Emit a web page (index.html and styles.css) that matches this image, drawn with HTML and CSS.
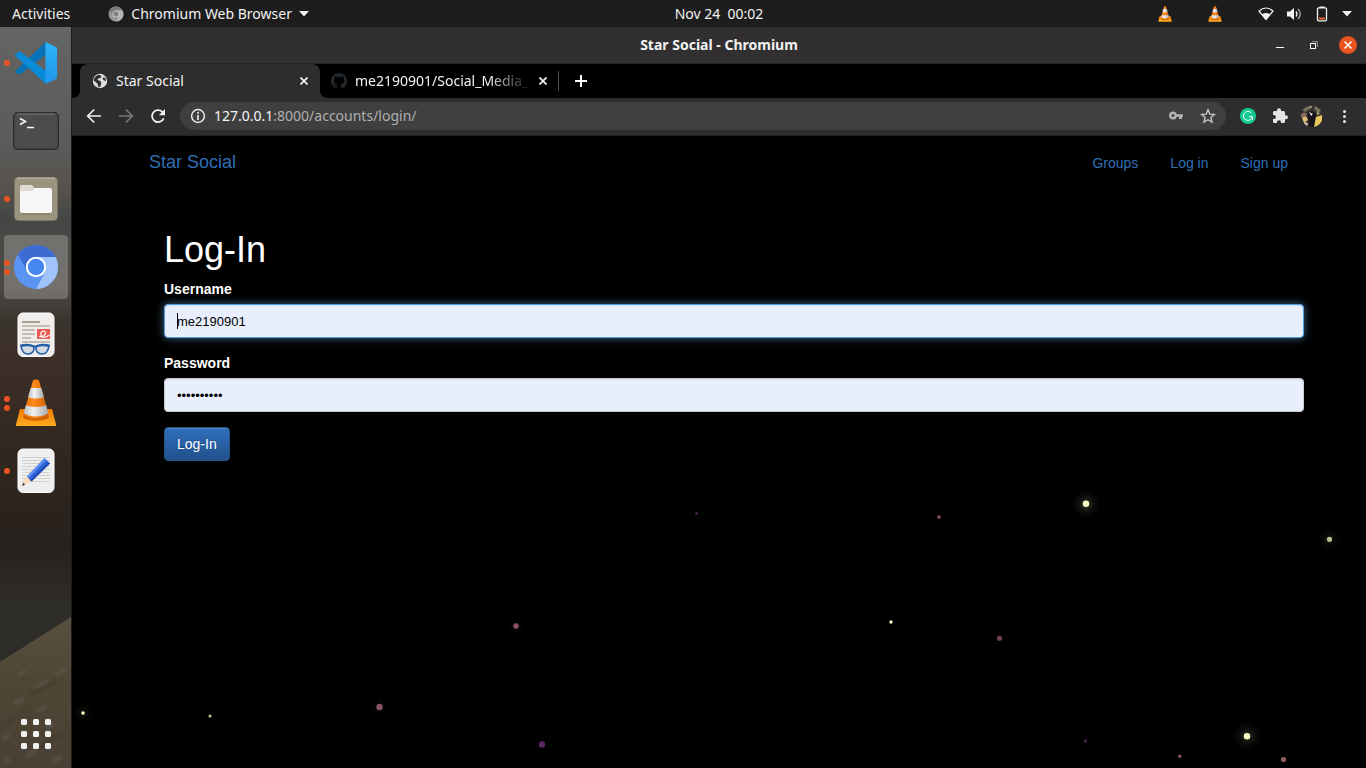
FILE: index.html
```html
<!DOCTYPE html>
<html lang="en">
<head>
<meta charset="utf-8">
<title>Star Social</title>
<link rel="stylesheet" href="styles.css">
</head>
<body>
<svg class="defs" width="0" height="0" aria-hidden="true">
  <defs>
    <linearGradient id="coneBase" x1="0" y1="0" x2="0" y2="1"><stop offset="0" stop-color="#f27a00"/><stop offset="1" stop-color="#ffad1f"/></linearGradient>
    <linearGradient id="coneOrange" x1="0" x2="1"><stop offset="0" stop-color="#e86a00"/><stop offset=".4" stop-color="#ff8c1a"/><stop offset="1" stop-color="#cf5a00"/></linearGradient>
    <linearGradient id="coneWhite" x1="0" x2="1"><stop offset="0" stop-color="#b9bcc0"/><stop offset=".4" stop-color="#f1f2f3"/><stop offset="1" stop-color="#a5a9ad"/></linearGradient>
    <linearGradient id="blade" x1="0" y1="0" x2="0" y2="1"><stop offset="0" stop-color="#2bb4f8"/><stop offset="1" stop-color="#1f96ea"/></linearGradient>
    <linearGradient id="wall" x1="0" y1="0" x2="0" y2="1">
      <stop offset="0" stop-color="#636563"/><stop offset=".16" stop-color="#5c5b5a"/><stop offset=".22" stop-color="#56524c"/><stop offset=".26" stop-color="#434644"/><stop offset=".3" stop-color="#4c4a47"/><stop offset=".35" stop-color="#4c4844"/><stop offset=".4" stop-color="#39332d"/><stop offset=".44" stop-color="#3d3028"/><stop offset=".56" stop-color="#33281f"/><stop offset=".7" stop-color="#27211d"/><stop offset=".78" stop-color="#2f2d28"/><stop offset="1" stop-color="#2c2b29"/>
    </linearGradient>
    <linearGradient id="wood" x1="0" y1="0" x2="0" y2="1"><stop offset="0" stop-color="#58503f"/><stop offset=".45" stop-color="#4f4534"/><stop offset="1" stop-color="#4a4136"/></linearGradient>
    <filter id="soften"><feGaussianBlur stdDeviation="1.500"/></filter>
    <symbol id="cone" viewBox="0 0 42 48">
      <path d="M5 30h32l4 15.500q.4 1.500-1 1.500H2q-1.400 0-1-1.500z" fill="url(#coneBase)"/>
      <path d="M10 32 8 38c2 5 24 5 26 0l-2-6z" fill="#c65500" opacity=".75"/>
      <path d="M18 1.500Q21 -.5 24 1.500L33.500 35c-2 5.500-23 5.500-25 0z" fill="url(#coneOrange)"/>
      <path d="M15.800 9h10.400L29 18c-3 2-13 2-16 0z" fill="url(#coneWhite)"/>
      <path d="M11 26c4 2.500 16 2.500 20 0l2.300 8c-5 4.500-19.500 4.500-24.600 0z" fill="url(#coneWhite)"/>
    </symbol>
  </defs>
</svg>

<header class="topbar">
  <div class="topbar-left">
    <button class="bar-btn">Activities</button>
    <button class="bar-btn app-menu">
      <svg width="16" height="16" viewBox="0 0 16 16"><circle cx="8" cy="8" r="7.500" fill="#969696"/><path d="M8 4.200h6.400A7.500 7.500 0 0 1 8 15.500L11.300 10z" fill="#b4b4b4"/><path d="M1.600 4A7.500 7.500 0 0 1 14.400 4.200H8L4.700 9.500z" fill="#7b7b7b"/><circle cx="8" cy="8" r="3.600" fill="#d5d5d5"/><circle cx="8" cy="8" r="2.700" fill="#828282"/></svg>
      <span>Chromium Web Browser</span>
      <svg width="10" height="6" viewBox="0 0 10 6"><path d="M0 0h10L5 5.500z" fill="#f2f2f2"/></svg>
    </button>
  </div>
  <button class="bar-btn clock">Nov 24&nbsp; 00:02</button>
  <div class="tray">
    <svg class="tray-cone" width="14" height="16"><use href="#cone"/></svg>
    <svg class="tray-cone" width="14" height="16"><use href="#cone"/></svg>
    <svg width="16" height="14" viewBox="0 0 16 14"><path d="M1 4Q8-2 15 4L8 12.500z" fill="none" stroke="#f2f2f2" stroke-width="1.200" stroke-linejoin="round"/><path d="M4 7.300Q8 4.500 12 7.300L8 12.500z" fill="#f2f2f2"/></svg>
    <svg width="16" height="14" viewBox="0 0 16 14"><path d="M1 4.500h3L8 1v12L4 9.500H1z" fill="#f2f2f2"/><path d="M10 4.500q2 2.500 0 5" fill="none" stroke="#f2f2f2" stroke-width="1.300"/><path d="M12 2q4.500 5 0 10" fill="none" stroke="#a8a8a8" stroke-width="1.300"/></svg>
    <svg width="16" height="16" viewBox="0 0 16 16"><path d="M5.500 2V.5h5V2" fill="#f2f2f2"/><rect x="3.500" y="1.800" width="9" height="13" rx="1.200" fill="none" stroke="#f2f2f2" stroke-width="1.300"/><path d="M5 11.500h6v2H5z" fill="#f0652f"/></svg>
    <svg width="10" height="6" viewBox="0 0 10 6"><path d="M0 0h10L5 5.500z" fill="#f2f2f2"/></svg>
  </div>
</header>

<div class="desktop">
  <nav class="dock" aria-label="Dock">
    <svg class="wallpaper" viewBox="0 0 71 741" preserveAspectRatio="none">
      <path d="M0 0h71v741H0z" fill="url(#wall)"/>
      <path d="M0 635 71 590V741H0z" fill="url(#wood)"/>
      <g stroke="#6a665e" stroke-width="3" opacity=".5" filter="url(#soften)"><path d="M18 648 26 644M36 660 48 654M55 648 66 642M14 676 24 672M38 684 46 680M2 712 10 708M46 702 54 697M26 730 36 724M52 735 62 730M4 735 10 732"/></g>
      <g stroke="#3a3228" stroke-width="2" opacity=".6" filter="url(#soften)"><path d="M0 700 30 680M30 668 56 654M40 720 70 702"/></g>
    </svg>
    <button class="dock-item" aria-label="Visual Studio Code">
      <span class="dots"><i></i></span>
      <svg width="42" height="42" viewBox="0 0 42 42"><path d="M0 29.500 30.500 0v13L5.500 32q-1 .8-2 0L.5 30.800q-.8-.6-.5-1.300z" fill="#0872b9"/><path d="M.3 12.500 3.500 9.800q1-.6 2 0L31 29v13L.5 14q-.6-.8-.2-1.500z" fill="#0a8bd8"/><path d="M30.500 0 42 5.500v31L30.500 42z" fill="url(#blade)"/></svg>
    </button>
    <button class="dock-item" aria-label="Terminal">
      <svg width="46" height="38" viewBox="0 0 46 38"><rect x=".7" y=".7" width="44.600" height="36.600" rx="4" fill="#4c4c4c" stroke="#2c2c2c" stroke-width="1.400"/><path d="M4 2h38" stroke="#7d7d7d"/><path d="m7 6.500 5.500 3-5.500 3" fill="none" stroke="#fff" stroke-width="1.500"/><path d="M14 15.500h7" stroke="#fff" stroke-width="1.500"/></svg>
    </button>
    <button class="dock-item" aria-label="Files">
      <span class="dots"><i></i></span>
      <svg width="46" height="46" viewBox="0 0 46 46"><rect x="1" y="1" width="44" height="44" rx="4.500" fill="#9b9480" stroke="#57534a"/><path d="M4 2h38" stroke="#c5bfae"/><path d="M7 19v-8q0-2 2-2h9q1.500 0 2.200 1.500L22 13H38v6z" fill="#dfdbd0"/><rect x="7" y="12" width="32" height="25" rx="2.500" fill="#f8f7f5"/><path d="M7 15h12l3-3H8z" fill="#dfdbd0"/><path d="M9 38h28" stroke="#7b7463"/></svg>
    </button>
    <button class="dock-item active" aria-label="Chromium">
      <span class="dots"><i></i><i></i></span>
      <svg width="44" height="44" viewBox="0 0 44 44"><circle cx="22" cy="22" r="22" fill="#5b95f4"/><path d="M22 12H41.600A22 22 0 0 1 22 44L31.500 26.500z" fill="#a1c3fb"/><path d="M4 9.500A22 22 0 0 1 41.600 12H22L12.800 26z" fill="#3c6bd2"/><circle cx="22" cy="22" r="10.200" fill="#fff"/><circle cx="22" cy="22" r="8.200" fill="#4688f1"/></svg>
    </button>
    <button class="dock-item" aria-label="Document Viewer">
      <svg width="38" height="46" viewBox="0 0 38 46"><rect x="1" y="1" width="36" height="43.500" rx="5" fill="#efeeed" stroke="#fff"/><g stroke="#c3bdb4" stroke-width="2"><path d="M5 10h18" stroke="#a89f92"/><path d="M5 14h28M5 18h13M5 22h13M5 26h9M5 30h28"/></g><path d="M20 17h13v10H20z" fill="#ec5b51"/><path d="M22 24.500c7 1 8-5.500 4.500-5.500s-3.500 6 0 6.300 4-1.800 6-2.300" fill="none" stroke="#fff" stroke-width="1.200"/><path d="M4 34.200q7-2 13 .5.500 7-6 7.300C6.500 42 5 39.500 4 34.200zM32 34.200q-7-2-13 .5-.5 7 6 7.300c4.500 0 6-2.500 7-7.800z" fill="#d4dae0" stroke="#265ea8" stroke-width="1.700"/><path d="M3 33.500q8-2 15 1 7-3 15-1" fill="none" stroke="#265ea8" stroke-width="1.800"/></svg>
    </button>
    <button class="dock-item" aria-label="VLC media player">
      <span class="dots"><i></i><i></i></span>
      <svg width="42" height="48"><use href="#cone"/></svg>
    </button>
    <button class="dock-item" aria-label="Text Editor">
      <span class="dots"><i></i></span>
      <svg width="38" height="46" viewBox="0 0 38 46"><rect x="1" y="1" width="36" height="43.500" rx="5" fill="#efefef" stroke="#fff"/><path d="M5 9.500h28M5 12.500h28M5 15.500h28M5 18.500h28M5 21.500h28M5 24.500h28M5 27.500h28M5 30.500h28M5 33.500h28" stroke="#d0d0d0"/><path d="m5 38 4-9.500 6 5z" fill="#fcd9b8"/><path d="m5 38 1.200-3.300 2 1.800z" fill="#333"/><path d="M10 28.500 27.500 10l5.500 5.500-18.500 18z" fill="#2f66dc"/><path d="m10 28.500 17.500-18.500 1.800 1.800-17.800 18.200z" fill="#5f8ff2"/><path d="m13 32 18-18 2 1.500-18.500 18z" fill="#1f4db4"/></svg>
    </button>
    <button class="dock-item show-apps" aria-label="Show Applications">
      <svg width="30" height="30" viewBox="0 0 30 30" fill="#f2f2f2"><rect width="6" height="6" rx="1.500"/><rect x="12" width="6" height="6" rx="1.500"/><rect x="24" width="6" height="6" rx="1.500"/><rect y="12" width="6" height="6" rx="1.500"/><rect x="12" y="12" width="6" height="6" rx="1.500"/><rect x="24" y="12" width="6" height="6" rx="1.500"/><rect y="24" width="6" height="6" rx="1.500"/><rect x="12" y="24" width="6" height="6" rx="1.500"/><rect x="24" y="24" width="6" height="6" rx="1.500"/></svg>
    </button>
  </nav>

  <div class="window">
    <div class="titlebar">
      <span class="title">Star Social - Chromium</span>
      <div class="win-controls">
        <button aria-label="Minimize"><svg width="18" height="18" viewBox="0 0 18 18"><path d="M5 11.500h8" stroke="#fff"/></svg></button>
        <button aria-label="Restore"><svg width="18" height="18" viewBox="0 0 18 18"><path d="M7 5.500h5.500V11" fill="none" stroke="#929292"/><rect x="5.500" y="7.500" width="5" height="5" fill="none" stroke="#fff"/></svg></button>
        <button aria-label="Close"><svg width="18" height="18" viewBox="0 0 18 18"><circle cx="9" cy="9" r="9" fill="#e95420"/><path d="m5.500 5.500 7 7m0-7-7 7" stroke="#fff" stroke-width="1.500"/></svg></button>
      </div>
    </div>

    <div class="tabs">
      <div class="tab current">
        <svg width="16" height="16" viewBox="0 0 16 16"><circle cx="8" cy="8" r="7.200" fill="#dedede"/><path d="M7.200 1.800 9.500 3l-1 2.200H6.300L5.500 7l3 1 .8 2.300L8 14.200l-2-.8-.2-2.300L3 8.500l-1.300-.7C1.800 5 4 2.300 7.200 1.800zM11 4.500l2.200.3 1 3.200-2-.5-1.500-1.300z" fill="#2d2d2d"/></svg>
        <span class="tab-title">Star Social</span>
        <button class="tab-close" aria-label="Close tab"><svg width="8" height="8" viewBox="0 0 8 8"><path d="m.5.5 7 7m0-7-7 7" stroke="#f4f4f4" stroke-width="1.700"/></svg></button>
      </div>
      <div class="tab">
        <svg width="16" height="16" viewBox="0 0 16 16"><path fill="#24292e" d="M8 0C3.580 0 0 3.580 0 8c0 3.540 2.290 6.530 5.470 7.590.4.070.55-.17.55-.38v-1.490c-2.010.37-2.530-.49-2.690-.94-.09-.23-.48-.94-.82-1.130-.28-.15-.68-.52-.01-.53.63-.01 1.080.58 1.230.82.72 1.210 1.870.87 2.330.66.07-.52.28-.87.51-1.070-1.780-.2-3.640-.89-3.640-3.950 0-.87.31-1.590.82-2.150-.08-.2-.36-1.020.08-2.120 0 0 .67-.21 2.200.82a7.500 7.500 0 0 1 4 0c1.530-1.040 2.200-.82 2.200-.82.44 1.100.16 1.920.08 2.120.51.56.82 1.270.82 2.150 0 3.070-1.870 3.750-3.650 3.950.29.25.54.73.54 1.480v2.200c0 .21.15.46.55.38A8 8 0 0 0 16 8c0-4.420-3.580-8-8-8z"/></svg>
        <span class="tab-title faded">me2190901/Social_Media_</span>
        <button class="tab-close" aria-label="Close tab"><svg width="8" height="8" viewBox="0 0 8 8"><path d="m.5.5 7 7m0-7-7 7" stroke="#f4f4f4" stroke-width="1.700"/></svg></button>
      </div>
      <button class="new-tab" aria-label="New tab"><svg width="12" height="12" viewBox="0 0 12 12"><path d="M6 0v12M0 6h12" stroke="#fff" stroke-width="2"/></svg></button>
    </div>

    <div class="toolbar">
      <button aria-label="Back"><svg width="16" height="16" viewBox="0 0 16 16"><path d="M15 8H2M8.200 1.500 1.700 8l6.500 6.500" fill="none" stroke="#f0f0f0" stroke-width="1.700"/></svg></button>
      <button aria-label="Forward"><svg width="16" height="16" viewBox="0 0 16 16"><path d="M1 8h13M7.800 1.500 14.300 8l-6.500 6.500" fill="none" stroke="#787878" stroke-width="1.700"/></svg></button>
      <button aria-label="Reload"><svg width="16" height="16" viewBox="0 0 16 16"><path d="M13.700 10.200A6 6 0 1 1 12.300 3.800L14 5.500" fill="none" stroke="#f0f0f0" stroke-width="1.800"/><path d="M15 1v6.200H8.800z" fill="#f0f0f0"/></svg></button>
      <div class="omnibox">
        <svg width="16" height="16" viewBox="0 0 16 16"><circle cx="8" cy="8" r="6.400" fill="none" stroke="#e8e8e8" stroke-width="1.500"/><path d="M8 7v5M8 4v1.700" stroke="#e8e8e8" stroke-width="1.700"/></svg>
        <div class="url"><b>127.0.0.1</b>:8000/accounts/login/</div>
        <button aria-label="Saved password"><svg width="16" height="16" viewBox="0 0 16 16"><path fill="#b5b5b5" fill-rule="evenodd" d="M5 3.500a4 4 0 1 0 3.800 5.200H11V11h3V8.700h1V6.300H8.800A4 4 0 0 0 5 3.500zm0 2.500a1.500 1.500 0 1 1 0 3 1.500 1.500 0 0 1 0-3z"/></svg></button>
        <button aria-label="Bookmark this page"><svg width="16" height="16" viewBox="0 0 16 16"><path d="m8 1.800 1.800 4.300 4.700.4-3.600 3 1.100 4.600L8 11.700l-4 2.400 1.100-4.600-3.600-3 4.700-.4z" fill="none" stroke="#c9c9c9" stroke-width="1.300"/></svg></button>
      </div>
      <button class="ext" aria-label="Grammarly"><svg width="16" height="16" viewBox="0 0 16 16"><circle cx="8" cy="8" r="8" fill="#12cb93"/><path d="M11.200 4.800A4.500 4.500 0 1 0 12.300 9M9 8.700h3.500V12" fill="none" stroke="#fff" stroke-width="1"/></svg></button>
      <button aria-label="Extensions"><svg width="16" height="16" viewBox="0 0 16 16"><path fill="#e3e3e3" d="M14 7.300h-1V4.500Q13 3 11.500 3H9V2.200a2 2 0 0 0-4 0V3H2.300Q1 3 1 4.500V7h.9a2 2 0 0 1 0 4H1v2.700Q1 15 2.300 15H5v-.8a2 2 0 0 1 4 0V15h2.500q1.500 0 1.500-1.300v-2.500h1a1.950 1.950 0 0 0 0-3.900z"/></svg></button>
      <button class="profile" aria-label="Profile"><svg width="22" height="22" viewBox="0 0 22 22"><clipPath id="round"><circle cx="11" cy="11" r="11"/></clipPath><g clip-path="url(#round)"><path d="M0 0h22v22H0z" fill="#34302d"/><path d="M1 5 7 1l3 2-6 4zM14 1l6 4-2 3-5-4z" fill="#74735c"/><path d="M8 1h3l-1 3zM16 6l3 3-3 1z" fill="#a6a489"/><path d="M0 9q4-3 6 0l-3 4-3-1z" fill="#8c6d62"/><path d="M1 13 5 11l2 4-4 3z" fill="#e0bc78"/><path d="m7 8 4-2 4 3-1 5 0 8H8z" fill="#15131b"/><path d="m8 7 4 2-2 2z" fill="#e8e1d8"/><path d="m15 12 6-2v8l-5 4h-3z" fill="#e8c75c"/><path d="m3 17 4 1-1 4H3z" fill="#c9b5a8"/></g></svg></button>
      <button aria-label="Menu"><svg width="16" height="16" viewBox="0 0 16 16" fill="#e8e8e8"><circle cx="8.500" cy="3.500" r="1.500"/><circle cx="8.500" cy="8.500" r="1.500"/><circle cx="8.500" cy="13.500" r="1.500"/></svg></button>
    </div>

    <div class="page">
      <svg class="sky" viewBox="0 0 1294 632" preserveAspectRatio="xMinYMin slice" aria-hidden="true">
        <defs><radialGradient id="halo"><stop offset="0" stop-color="#ffffc8" stop-opacity=".25"/><stop offset=".5" stop-color="#ffffc8" stop-opacity=".06"/><stop offset="1" stop-color="#ffffc8" stop-opacity="0"/></radialGradient></defs>
        <g fill="url(#halo)"><circle cx="1014" cy="368" r="14"/><circle cx="1257" cy="403" r="12" opacity=".4"/><circle cx="1175" cy="600" r="15" opacity=".8"/><circle cx="11" cy="577" r="10" opacity=".4"/><circle cx="444" cy="490" r="9" opacity=".25"/><circle cx="307" cy="571" r="9" opacity=".25"/></g>
        <g fill="#ffffc8"><circle cx="1014" cy="367.700" r="3.200"/><circle cx="1257.500" cy="403.300" r="2.600" fill="#bdbd94"/><circle cx="1175" cy="600.300" r="3.200"/><circle cx="11" cy="577" r="1.700"/><circle cx="138" cy="580" r="1.600" fill="#bdbd94"/><circle cx="819" cy="486" r="1.700"/></g>
        <g fill="#8a5064"><circle cx="624.500" cy="377.500" r="1.600" fill="#45204a"/><circle cx="867" cy="381" r="1.800"/><circle cx="444" cy="490" r="2.700"/><circle cx="927.500" cy="502.300" r="2.600" fill="#6d3f4f"/><circle cx="307.500" cy="571" r="3.200"/><circle cx="470" cy="608.500" r="3.200" fill="#5a2463"/><circle cx="1013.500" cy="605" r="1.600" fill="#54205a"/><circle cx="1107.800" cy="620.200" r="1.700"/><circle cx="1211.500" cy="623.500" r="2.600" fill="#925f60"/></g>
      </svg>
      <div class="container">
        <nav class="site-nav">
          <a class="brand" href="#">Star Social</a>
          <div class="links"><a href="#">Groups</a><a href="#">Log in</a><a href="#">Sign up</a></div>
        </nav>
        <form class="login">
          <h1>Log-In</h1>
          <div class="group">
            <label for="username">Username</label>
            <div class="field"><input class="focused" id="username" type="text" value="me2190901"><span class="caret"></span></div>
          </div>
          <div class="group">
            <label for="password">Password</label>
            <input id="password" type="password" value="abcdefghij">
          </div>
          <button class="submit" type="button">Log-In</button>
        </form>
      </div>
    </div>
  </div>
</div>
</body>
</html>
```
FILE: styles.css
```css
* { box-sizing: border-box; }

body {
  margin: 0;
  height: 100vh;
  display: flex;
  flex-direction: column;
  overflow: hidden;
  background: #000;
  font: 14px/20px "Noto Sans", sans-serif;
  color: #f2f2f2;
}

button {
  border: 0;
  padding: 0;
  background: none;
  font: inherit;
  color: inherit;
}

svg { display: block; flex: none; }
.defs { position: absolute; }

/* desktop top bar */
.topbar {
  flex: none;
  height: 27px;
  display: grid;
  grid-template-columns: 1fr auto 1fr;
  align-items: center;
  background: #1d1d1d;
}
.topbar-left { display: flex; gap: 38px; padding-left: 12px; }
.app-menu { display: flex; align-items: center; gap: 7px; }
.clock { padding-left: 72px; }
.topbar .clock { padding: 0 0 0 72px; }
.tray {
  display: flex;
  align-items: center;
  justify-content: flex-end;
  gap: 12px;
  padding-right: 14px;
}
.tray-cone { margin-right: 24px; }

/* dock */
.desktop { flex: 1; min-height: 0; display: flex; }
.dock {
  position: relative;
  flex: none;
  width: 72px;
  padding: 4px 4px 2px;
  border-right: 1px solid #1c1b1a;
  display: flex;
  flex-direction: column;
  gap: 4px;
}
.wallpaper { position: absolute; inset: 0; width: 100%; height: 100%; }
.dock-item {
  position: relative;
  width: 64px;
  height: 64px;
  display: grid;
  place-items: center;
  border-radius: 4px;
}
.dock-item.active { background: rgba(255, 255, 255, 0.22); }
.show-apps { margin-top: auto; }
.dots {
  position: absolute;
  left: 0;
  top: 0;
  bottom: 0;
  display: flex;
  flex-direction: column;
  justify-content: center;
  gap: 3px;
}
.dots i { width: 6px; height: 6px; border-radius: 50%; background: #e95420; }

/* browser window */
.window { flex: 1; min-width: 0; display: flex; flex-direction: column; }
.titlebar {
  flex: none;
  height: 37px;
  display: grid;
  grid-template-columns: 1fr auto 1fr;
  align-items: center;
  background: #312f30;
  border-bottom: 1px solid #232222;
}
.title { grid-column: 2; font-weight: bold; }
.win-controls { display: flex; justify-content: flex-end; gap: 16px; padding-right: 9px; }

.tabs { flex: none; height: 34px; display: flex; padding-left: 8px; background: #000; }
.tab {
  position: relative;
  width: 238px;
  display: flex;
  align-items: center;
  gap: 8px;
  padding: 0 11px;
}
.tab.current { width: 240px; padding: 0 12px; background: #2d2d2d; border-radius: 8px 8px 0 0; }
.tab.current::before,
.tab.current::after {
  content: "";
  position: absolute;
  bottom: 0;
  width: 8px;
  height: 8px;
}
.tab.current::before { left: -8px; background: radial-gradient(circle at 0 0, transparent 8px, #2d2d2d 8px); }
.tab.current::after { right: -8px; background: radial-gradient(circle at 100% 0, transparent 8px, #2d2d2d 8px); }
.tab-title { flex: 1; min-width: 0; overflow: hidden; white-space: nowrap; }
.faded { mask-image: linear-gradient(to right, #000 75%, transparent); }
.new-tab { margin: 7px 0; padding: 0 16px; border-left: 1px solid #4c4c4c; }

.toolbar {
  flex: none;
  height: 38px;
  display: flex;
  align-items: center;
  gap: 16px;
  padding: 0 14px 1px;
  background: #2d2d2d;
  border-bottom: 1px solid #222;
}
.omnibox {
  flex: 1;
  height: 28px;
  display: flex;
  align-items: center;
  gap: 16px;
  margin: 0 -2px;
  padding: 0 10px;
  border-radius: 14px;
  background: #3f3f3f;
}
.url { flex: 1; margin-left: -8px; color: #b0b0b0; }
.url b { font-weight: normal; color: #f4f4f4; }
.profile { margin: 0 -3px; }

/* web page */
.page {
  position: relative;
  flex: 1;
  overflow: hidden;
  background: #000;
  font-family: "Liberation Sans", Arial, sans-serif;
}
.sky { position: absolute; inset: 0; width: 100%; height: 100%; }
.container { position: relative; max-width: 1170px; margin: 0 auto; padding: 0 15px; }
.site-nav { display: flex; justify-content: space-between; padding-top: 16px; }
.site-nav a { color: #306fb5; text-decoration: none; }
.brand { font-size: 18px; }
.links { display: flex; gap: 32px; padding: 1px 1px 0 0; }

.login { margin: 57px -15px 0 0; padding-left: 15px; }
.login h1 { margin: 0 0 9px; font-size: 36px; font-weight: normal; line-height: 40px; color: #fff; }
.group { margin-bottom: 15px; }
.login label { display: block; margin-bottom: 5px; font-weight: bold; color: #fff; }
.field { position: relative; }
.login input {
  display: block;
  width: 100%;
  height: 34px;
  padding: 6px 12px;
  border: 1px solid #ccc;
  border-radius: 4px;
  outline: 0;
  background: #e8eefe;
  box-shadow: inset 0 1px 1px rgba(0, 0, 0, 0.075);
  font: 13px "Liberation Sans", Arial, sans-serif;
  color: #000;
}
.login input.focused {
  border-color: #4da0e8;
  box-shadow: inset 0 1px 1px rgba(0, 0, 0, 0.075), 0 0 8px rgba(102, 175, 233, 0.6);
}
.caret { position: absolute; left: 13px; top: 9px; width: 1px; height: 16px; background: #000; }
.submit {
  height: 34px;
  padding: 0 12px;
  border: 1px solid #245580;
  border-radius: 4px;
  background: linear-gradient(#2f6fbd, #21508c);
  box-shadow: inset 0 1px 0 rgba(255, 255, 255, 0.15);
  text-shadow: 0 -1px 0 rgba(0, 0, 0, 0.2);
  color: #fff;
}
```
